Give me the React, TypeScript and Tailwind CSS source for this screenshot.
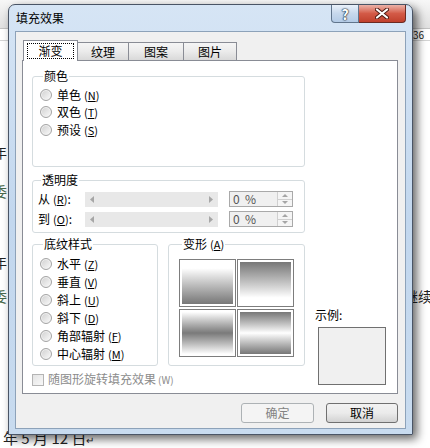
import React from "react";

const tiles = [
  "bg-linear-to-b from-white from-15% to-[#777777]",
  "bg-linear-to-b from-[#777777] to-white to-85%",
  "bg-linear-to-b from-white via-[#7a7a7a] to-white",
  "bg-linear-to-b from-[#777777] via-white to-[#777777]",
];

function Acc({ k }: { k: string }) {
  return (
    <span className="ml-[3px] text-[11px]">
      (<span className="underline underline-offset-[1px]">{k}</span>)
    </span>
  );
}

function Radio({ label, k, row }: { label: string; k: string; row: string }) {
  return (
    <div className={`flex items-center gap-[5px] ${row}`}>
      <span className="h-[12px] w-[12px] shrink-0 rounded-full border border-[#a4a4a4] bg-linear-to-br from-[#cfcfcf] to-[#fbfbfb] shadow-[inset_0_0_0_1px_#f2f2f2]" />
      <span className="whitespace-nowrap">
        {label}
        <Acc k={k} />
      </span>
    </div>
  );
}

function Arrow({ dir }: { dir: "l" | "r" | "u" | "d" }) {
  const pts = {
    l: "4,0 4,7 0,3.5",
    r: "0,0 0,7 4,3.5",
    u: "0,3 6,3 3,0",
    d: "0,0 6,0 3,3",
  }[dir];
  const horiz = dir === "l" || dir === "r";
  return (
    <svg width={horiz ? 4 : 6} height={horiz ? 7 : 3} viewBox={horiz ? "0 0 4 7" : "0 0 6 3"}>
      <polygon points={pts} fill="#a6a6a6" />
    </svg>
  );
}

function Slider({ label, k }: { label: string; k: string }) {
  return (
    <div className="flex h-[16px] items-center">
      <span className="w-[47px] whitespace-nowrap">
        {label}
        <Acc k={k} />:
      </span>
      <div className="flex h-[15px] w-[133px] items-center justify-between bg-[#e8e8e8] px-[5px]">
        <Arrow dir="l" />
        <Arrow dir="r" />
      </div>
      <div className="ml-[11px] flex h-[16px] w-[64px] border border-[#a9a9a9] bg-[#f0f0f0]">
        <span className="flex-1 pl-[3px] text-[12px] leading-[14px] text-[#555]">0&nbsp;&nbsp;%</span>
        <div className="flex w-[15px] flex-col border-l border-[#d0d0d0]">
          <div className="flex flex-1 items-center justify-center border-b border-[#d0d0d0] bg-[#f5f5f5]">
            <Arrow dir="u" />
          </div>
          <div className="flex flex-1 items-center justify-center bg-[#f5f5f5]">
            <Arrow dir="d" />
          </div>
        </div>
      </div>
    </div>
  );
}

function Group({ title, className, children }: { title: React.ReactNode; className: string; children: React.ReactNode }) {
  return (
    <fieldset className={`rounded-[3px] border border-[#d5dcdf] ${className}`}>
      <legend className="ml-[3px] px-[1px] leading-[14px]">{title}</legend>
      {children}
    </fieldset>
  );
}

function CaptionButtons() {
  return (
    <div className="mr-[6px] flex">
      <div className="flex h-[18px] w-[28px] items-center justify-center rounded-bl-[4px] border border-t-0 border-[#61758c] bg-linear-to-b from-[#e9f1fa] via-[#c7d8ec] to-[#b4cbe6]">
        <span className="text-[14px] font-bold leading-[14px] text-white [text-shadow:0_0_1px_#1c2a3a,0_0_1px_#1c2a3a,0_0_2px_#1c2a3a]">?</span>
      </div>
      <div className="flex h-[18px] w-[47px] items-center justify-center rounded-br-[4px] border border-t-0 border-l-0 border-[#6b2a22] bg-linear-to-b from-[#eab2a9] via-[#d35a47] to-[#c0402c]">
        <svg width="14" height="11" viewBox="0 0 14 11">
          <path d="M2 1.5 L12 9.5 M12 1.5 L2 9.5" stroke="#4a1810" strokeWidth="4" strokeLinecap="round" />
          <path d="M2 1.5 L12 9.5 M12 1.5 L2 9.5" stroke="#ffffff" strokeWidth="2.2" strokeLinecap="round" />
        </svg>
      </div>
    </div>
  );
}

export default function App() {
  return (
    <div className="relative h-[448px] w-[430px] overflow-hidden bg-white font-['Noto_Sans_CJK_SC','Liberation_Sans',sans-serif] text-[12px] leading-[14px] text-black">
      {/* document behind the dialog */}
      <div className="flex h-full flex-col text-[14px] leading-[15px] text-[#222]">
        <div className="h-[30px] border-b border-[#c2c2c2] bg-linear-to-b from-[#f7f7f7] to-[#e0e0e0]" />
        <div className="flex h-[12px] justify-end border-b border-[#d4d4d4] pr-[6px] text-[10px] leading-[12px]">36</div>
        <div className="mt-[104px] -ml-[7px]">年</div>
        <div className="mt-[24px] -ml-[7px] text-[#4c6a4c]">委</div>
        <div className="mt-[56px] -ml-[7px]">年</div>
        <div className="mt-[19px] flex justify-between">
          <span className="-ml-[7px] text-[#4c6a4c]">委</span>
          <span className="-mr-[2px]">继续</span>
        </div>
        <div className="mt-[126px] pl-[3px] text-[15px] leading-[16px]">
          年 5 月 12 日<span className="text-[10px]">↵</span>
        </div>
      </div>

      {/* dialog window */}
      <div className="absolute left-[8px] top-[4px] flex h-[431px] w-[405px] flex-col rounded-t-[7px] border border-[#4a5566] bg-linear-to-b from-[#d6e5f5] via-[#c2d7ee] to-[#c8dbef] shadow-[4px_4px_10px_rgba(0,0,0,0.6)]">
        <div className="flex h-[26px] items-start justify-between">
          <span className="pl-[7px] pt-[6px] text-[12px] leading-[14px]">填充效果</span>
          <CaptionButtons />
        </div>

        <div className="mx-[6px] flex h-[398px] flex-col border border-[#8da2b9] bg-[#f0f0f0] px-[6px] pb-[5px] pr-[7px] pt-[8px]">
          {/* tabs */}
          <div className="relative z-10 flex h-[21px] items-end pl-[1px]">
            <div className="flex h-[21px] w-[55px] items-start justify-center border border-b-0 border-[#898c95] bg-white pt-[2px]">
              <span className="flex h-[16px] w-[47px] items-center justify-center border border-dotted border-black">渐变</span>
            </div>
            {["纹理", "图案", "图片"].map((t, i) => (
              <div
                key={t}
                className={`-ml-[1px] mb-[1px] flex h-[18px] items-center justify-center border border-b-0 border-[#898c95] bg-linear-to-b from-[#f5f5f5] via-[#ebebeb] to-[#d9d9d9] ${
                  i === 0 ? "w-[52px]" : i === 1 ? "w-[56px]" : "w-[54px]"
                }`}
              >
                {t}
              </div>
            ))}
          </div>

          {/* tab page */}
          <div className="-mt-[1px] grid h-[334px] w-[376px] grid-cols-[282px_1fr] border border-[#898c95] bg-white">
            <div className="flex flex-col pl-[9px]">
              <Group title="颜色" className="mt-[8px] h-[98px] pl-[7px] pt-[3px]">
                <Radio label="单色" k="N" row="h-[17.5px]" />
                <Radio label="双色" k="T" row="h-[17.5px]" />
                <Radio label="预设" k="S" row="h-[17.5px]" />
              </Group>

              <Group title="透明度" className="mt-[6px] h-[60px] pl-[5px] pt-[4px]">
                <div className="flex flex-col gap-[4px]">
                  <Slider label="从" k="R" />
                  <Slider label="到" k="O" />
                </div>
              </Group>

              <div className="mt-[4px] flex gap-[10px]">
                <Group title="底纹样式" className="h-[129px] w-[126px] pl-[7px] pt-[4px]">
                  <Radio label="水平" k="Z" row="h-[18px]" />
                  <Radio label="垂直" k="V" row="h-[18px]" />
                  <Radio label="斜上" k="U" row="h-[18px]" />
                  <Radio label="斜下" k="D" row="h-[18px]" />
                  <Radio label="角部辐射" k="F" row="h-[18px]" />
                  <Radio label="中心辐射" k="M" row="h-[18px]" />
                </Group>
                <Group
                  title={
                    <>
                      变形<Acc k="A" />
                    </>
                  }
                  className="h-[129px] w-[137px] pl-[10px] pt-[8px]"
                >
                  <div className="grid w-[115px] grid-cols-2 gap-x-[1px] gap-y-[2px]">
                    {tiles.map((g) => (
                      <div key={g} className="h-[48px] w-[57px] border border-[#7d7d7d] bg-white p-[2px]">
                        <div className={`h-full w-full ${g}`} />
                      </div>
                    ))}
                  </div>
                </Group>
              </div>

              <div className="mt-[6px] flex items-center gap-[4px] text-[#8c8c8c]">
                <span className="h-[12px] w-[12px] border border-[#b4b4b4] bg-linear-to-br from-[#e4e4e4] to-[#f8f8f8]" />
                <span>
                  随图形旋转填充效果<span className="ml-[2px] text-[10px]">(W)</span>
                </span>
              </div>
            </div>

            <div className="flex flex-col justify-end pb-[8px] pl-[10px]">
              <span className="mb-[5px]">示例:</span>
              <div className="ml-[3px] h-[58px] w-[68px] border border-[#707070] bg-[#f0f0f0]" />
            </div>
          </div>

          {/* buttons */}
          <div className="mt-[9px] flex justify-end gap-[12px]">
            <button className="h-[20px] w-[73px] rounded-[3px] border border-[#adb2b5] bg-[#f4f4f4] text-[12px] text-[#838383]">
              确定
            </button>
            <button className="h-[20px] w-[72px] rounded-[3px] border border-[#707070] bg-linear-to-b from-[#f2f2f2] via-[#ebebeb] to-[#d2d2d2] text-[12px]">
              取消
            </button>
          </div>
        </div>
      </div>
    </div>
  );
}
